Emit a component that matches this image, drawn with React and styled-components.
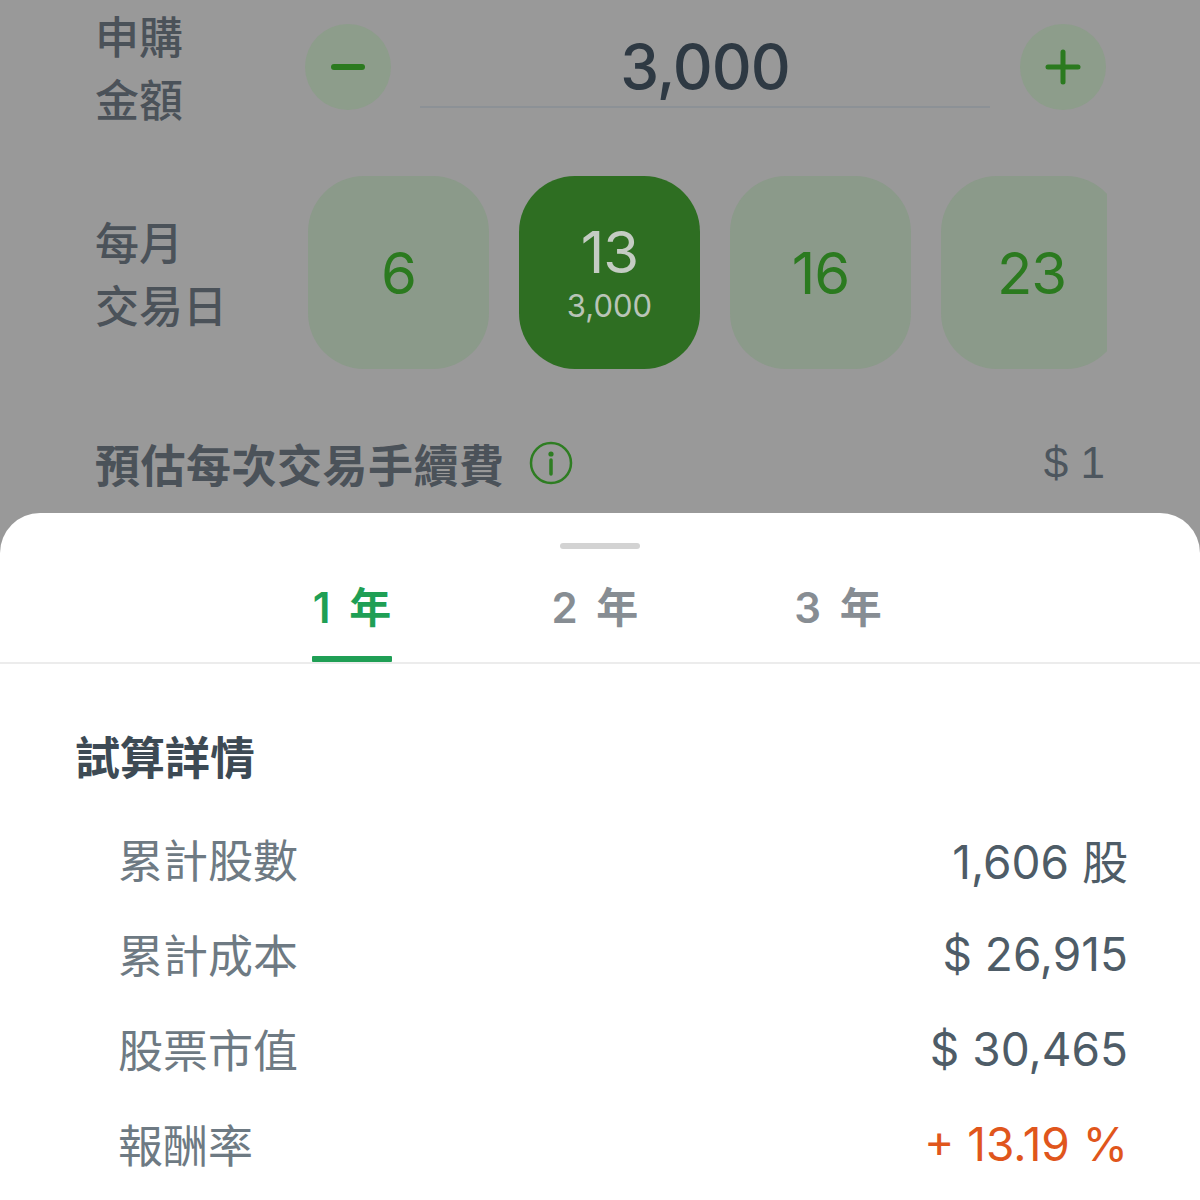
import React from "react";
import styled, { createGlobalStyle } from "styled-components";

const Global = createGlobalStyle`
  html, body { margin: 0; padding: 0; background: #999999; }
  body { font-family: Inter, "Noto Sans CJK TC", sans-serif; }
  * { box-sizing: border-box; }
`;

const Page = styled.div`
  width: 1200px;
  height: 1200px;
  overflow: hidden;
  display: flex;
  flex-direction: column;
  background: #999999;
`;

const Top = styled.div`
  height: 513px;
  flex: none;
  padding: 0 94px 0 95px;
  display: flex;
  flex-direction: column;
`;

const FormRow = styled.div`
  display: grid;
  grid-template-columns: 213px 1fr;
  align-items: center;
  height: ${(p) => p.$h}px;
  margin-top: ${(p) => p.$mt || 0}px;
`;

const Label = styled.div`
  font-family: "Noto Sans CJK TC", sans-serif;
  font-size: 44px;
  line-height: 63px;
  color: #4b5259;
  font-weight: 500;
`;

const AmountControl = styled.div`
  display: flex;
  align-items: center;
  margin-left: -3px;
`;

const RoundBtn = styled.div`
  width: 86px;
  height: 86px;
  border-radius: 50%;
  background: #8d9d8b;
  display: flex;
  align-items: center;
  justify-content: center;
  flex: none;
`;

const AmountField = styled.div`
  flex: 1;
  margin: 0 30px 0 29px;
  height: 82px;
  border-bottom: 2px solid #8c9196;
  display: flex;
  align-items: center;
  justify-content: center;
  font-size: 62px;
  font-weight: 500;
  color: #2e3943;
  letter-spacing: -1px;
`;

const Chips = styled.div`
  display: flex;
  gap: 30px;
  overflow: hidden;
  margin-right: -1px;
`;

const Chip = styled.div`
  flex: none;
  width: 181px;
  height: 193px;
  border-radius: 56px;
  background: ${(p) => (p.$active ? "#2e6e22" : "#8b9a8a")};
  display: flex;
  flex-direction: column;
  align-items: center;
  justify-content: center;
`;

const ChipDay = styled.div`
  font-size: 58px;
  line-height: 64px;
  color: ${(p) => (p.$active ? "#c4ccc3" : "#2b7a1f")};
  font-weight: 400;
  letter-spacing: -1px;
`;

const ChipAmount = styled.div`
  font-size: 31px;
  line-height: 40px;
  color: #b9c4b7;
  margin-top: 2px;
`;

const FeeRow = styled.div`
  margin-top: 64px;
  height: 60px;
  display: flex;
  align-items: center;
  justify-content: space-between;
  padding-right: 1px;
`;

const FeeLabel = styled.div`
  display: flex;
  align-items: center;
  gap: 24px;
  font-family: "Noto Sans CJK TC", sans-serif;
  font-size: 45px;
  font-weight: 700;
  color: #4b5259;
  letter-spacing: 0.5px;
`;

const FeeValue = styled.div`
  font-size: 44px;
  color: #4d565e;
  font-family: "Liberation Sans", sans-serif;
`;

const Sheet = styled.div`
  flex: 1;
  background: #ffffff;
  border-radius: 40px 40px 0 0;
  display: flex;
  flex-direction: column;
`;

const Handle = styled.div`
  width: 80px;
  height: 6px;
  border-radius: 3px;
  background: #d3d3d3;
  margin: 30px auto 0;
`;

const TabBar = styled.div`
  display: flex;
  justify-content: center;
  border-bottom: 2px solid #ececec;
  padding-right: 10px;
`;

const Tab = styled.div`
  width: 243px;
  display: flex;
  flex-direction: column;
  align-items: center;
  padding-top: 35px;
`;

const TabText = styled.div`
  font-size: 42px;
  line-height: 48px;
  font-weight: 600;
  color: ${(p) => (p.$active ? "#1f9f55" : "#878d93")};
  word-spacing: 8px;
`;

const TabLine = styled.div`
  margin-top: 24px;
  width: 80px;
  height: 6px;
  border-radius: 1px;
  background: ${(p) => (p.$active ? "#1f9f55" : "transparent")};
`;

const Details = styled.div`
  padding: 64px 75px 0 75px;
`;

const Title = styled.div`
  font-family: "Noto Sans CJK TC", sans-serif;
  font-size: 45px;
  line-height: 56px;
  font-weight: 700;
  color: #3d4a54;
`;

const List = styled.div`
  margin-top: 27px;
  padding-left: 43px;
`;

const Row = styled.div`
  height: 95px;
  display: flex;
  align-items: center;
  justify-content: space-between;
`;

const RowLabel = styled.div`
  font-family: "Noto Sans CJK TC", sans-serif;
  font-size: 45px;
  color: #6e7a83;
`;

const RowValue = styled.div`
  font-size: 46px;
  margin-right: -3px;
  color: ${(p) => (p.$up ? "#e0561c" : "#4e5c67")};
`;

const MinusIcon = () => (
  <svg width="36" height="8" viewBox="0 0 36 8">
    <line x1="4" y1="4" x2="32" y2="4" stroke="#2b7a1f" strokeWidth="6" strokeLinecap="round" />
  </svg>
);

const PlusIcon = () => (
  <svg width="36" height="36" viewBox="0 0 36 36">
    <line x1="3" y1="18" x2="33" y2="18" stroke="#2b7a1f" strokeWidth="5" strokeLinecap="round" />
    <line x1="18" y1="3" x2="18" y2="33" stroke="#2b7a1f" strokeWidth="5" strokeLinecap="round" />
  </svg>
);

const InfoIcon = () => (
  <svg width="44" height="44" viewBox="0 0 44 44">
    <circle cx="22" cy="22" r="20" fill="none" stroke="#2e7d22" strokeWidth="2.5" />
    <circle cx="22" cy="13" r="2.6" fill="#2e7d22" />
    <line x1="22" y1="19" x2="22" y2="33" stroke="#2e7d22" strokeWidth="3.5" strokeLinecap="round" />
  </svg>
);

const days = [
  { d: "6" },
  { d: "13", amount: "3,000", active: true },
  { d: "16" },
  { d: "23" },
];

const rows = [
  { label: "累計股數", value: "1,606 股" },
  { label: "累計成本", value: "$ 26,915" },
  { label: "股票市值", value: "$ 30,465" },
  { label: "報酬率", value: "+ 13.19 %", up: true },
];

export default function App() {
  return (
    <Page>
      <Global />
      <Top>
        <FormRow $h={134}>
          <Label>
            申購
            <br />
            金額
          </Label>
          <AmountControl>
            <RoundBtn>
              <MinusIcon />
            </RoundBtn>
            <AmountField>3,000</AmountField>
            <RoundBtn>
              <PlusIcon />
            </RoundBtn>
          </AmountControl>
        </FormRow>
        <FormRow $h={193} $mt={42}>
          <Label>
            每月
            <br />
            交易日
          </Label>
          <Chips>
            {days.map((c) => (
              <Chip key={c.d} $active={c.active}>
                <ChipDay $active={c.active}>{c.d}</ChipDay>
                {c.amount && <ChipAmount>{c.amount}</ChipAmount>}
              </Chip>
            ))}
          </Chips>
        </FormRow>
        <FeeRow>
          <FeeLabel>
            預估每次交易手續費
            <InfoIcon />
          </FeeLabel>
          <FeeValue>$ 1</FeeValue>
        </FeeRow>
      </Top>
      <Sheet>
        <Handle />
        <TabBar>
          {["1 年", "2 年", "3 年"].map((t, i) => (
            <Tab key={t}>
              <TabText $active={i === 0}>{t}</TabText>
              <TabLine $active={i === 0} />
            </Tab>
          ))}
        </TabBar>
        <Details>
          <Title>試算詳情</Title>
          <List>
            {rows.map((r) => (
              <Row key={r.label}>
                <RowLabel>{r.label}</RowLabel>
                <RowValue $up={r.up}>{r.value}</RowValue>
              </Row>
            ))}
          </List>
        </Details>
      </Sheet>
    </Page>
  );
}
